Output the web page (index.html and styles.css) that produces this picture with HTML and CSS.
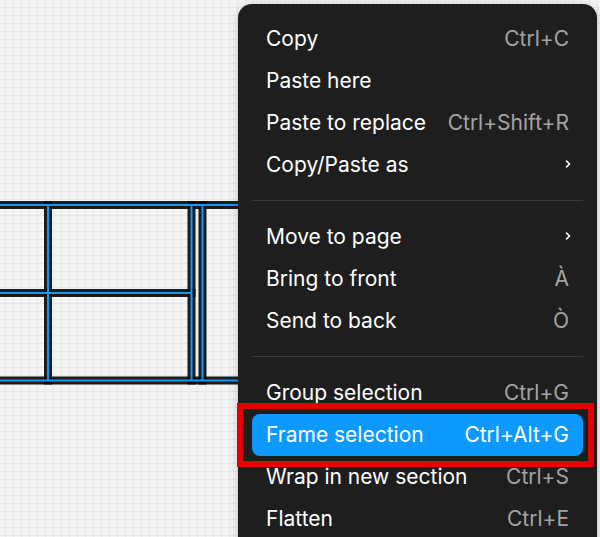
FILE: index.html
```html
<!DOCTYPE html>
<html>
<head>
<meta charset="utf-8">
<link rel="stylesheet" href="styles.css">
</head>
<body>
<div class="canvas">
  <svg class="diagram" width="600" height="537" viewBox="0 0 600 537">
    <g class="frame-edge">
      <path d="M-10 205 H240"/>
      <path d="M-10 380.5 H240"/>
      <path d="M-10 293 H191.5"/>
      <path d="M48 205 V380.5"/>
      <path d="M191.5 205 V380.5"/>
      <path d="M202.5 205 V380.5"/>
    </g>
    <g class="frame-sel">
      <path d="M-10 205 H240"/>
      <path d="M-10 380.5 H240"/>
      <path d="M-10 293 H191.5"/>
      <path d="M48 205 V380.5"/>
      <path d="M191.5 205 V380.5"/>
      <path d="M202.5 205 V380.5"/>
    </g>
  </svg>

  <div class="menu">
    <div class="item"><span>Copy</span><span class="key">Ctrl+C</span></div>
    <div class="item"><span>Paste here</span></div>
    <div class="item"><span>Paste to replace</span><span class="key">Ctrl+Shift+R</span></div>
    <div class="item"><span>Copy/Paste as</span><svg class="chev" width="8" height="12" viewBox="0 0 8 12"><path d="M2.5 3 L5.5 6 L2.5 9"/></svg></div>
    <div class="sep"></div>
    <div class="item"><span>Move to page</span><svg class="chev" width="8" height="12" viewBox="0 0 8 12"><path d="M2.5 3 L5.5 6 L2.5 9"/></svg></div>
    <div class="item"><span>Bring to front</span><span class="key">À</span></div>
    <div class="item"><span>Send to back</span><span class="key">Ò</span></div>
    <div class="sep"></div>
    <div class="item"><span>Group selection</span><span class="key">Ctrl+G</span></div>
    <div class="item active"><span>Frame selection</span><span class="key">Ctrl+Alt+G</span></div>
    <div class="item"><span>Wrap in new section</span><span class="key">Ctrl+S</span></div>
    <div class="item"><span>Flatten</span><span class="key">Ctrl+E</span></div>
  </div>

  <div class="callout"></div>
</div>
</body>
</html>
```

FILE: styles.css
```css
html, body {
  margin: 0;
  padding: 0;
}

body {
  width: 600px;
  height: 537px;
  overflow: hidden;
  font-family: Inter, "Noto Sans", sans-serif;
}

.canvas {
  position: relative;
  width: 600px;
  height: 537px;
  overflow: hidden;
  background-color: #f4f4f4;
  background-image:
    linear-gradient(to right, #e7e7e7 1px, transparent 1px),
    linear-gradient(to bottom, #e7e7e7 1px, transparent 1px);
  background-size: 8px 8px;
  background-position: 5px 7px;
}

.diagram {
  position: absolute;
  left: 0;
  top: 0;
}

.frame-edge path {
  fill: none;
  stroke: rgba(10, 10, 10, 0.92);
  stroke-width: 8;
  stroke-linecap: square;
}

.frame-sel path {
  fill: none;
  stroke: #0d99ff;
  stroke-width: 2;
}

.menu {
  position: absolute;
  left: 238px;
  top: 4px;
  width: 359px;
  box-sizing: border-box;
  padding: 14px 14px 40px;
  background: #1e1e1e;
  border-radius: 14px;
  box-shadow: 0 2px 12px rgba(0, 0, 0, 0.18);
  display: flex;
  flex-direction: column;
  color: #ffffff;
  font-size: 21px;
}

.item {
  height: 42px;
  box-sizing: border-box;
  display: flex;
  align-items: center;
  justify-content: space-between;
  padding: 0 14px 2px;
  border-radius: 8px;
  white-space: nowrap;
}

.key {
  color: rgba(255, 255, 255, 0.6);
}

.item.active {
  background: #0d99ff;
}

.item.active .key {
  color: #ffffff;
}

.chev {
  margin-right: -3px;
}

.chev path {
  fill: none;
  stroke: #ffffff;
  stroke-width: 1.6;
  stroke-linecap: round;
  stroke-linejoin: round;
}

.sep {
  height: 1px;
  margin: 14px 0 15px;
  background: #3a3a3a;
}

.callout {
  position: absolute;
  left: 237px;
  top: 403px;
  width: 345px;
  height: 52px;
  border: 6px solid #e50000;
}
```
